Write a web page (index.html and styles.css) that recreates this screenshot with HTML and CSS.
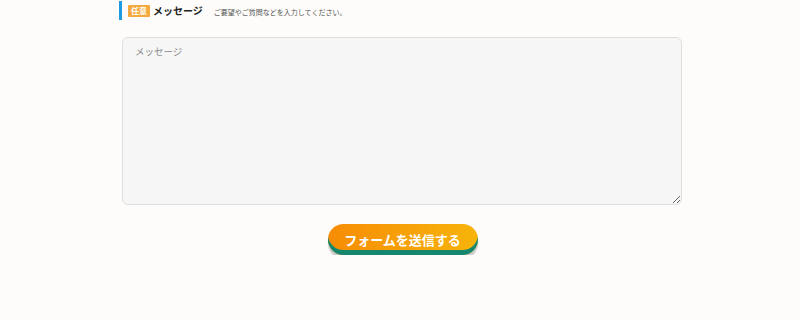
FILE: index.html
```html
<!DOCTYPE html>
<html lang="ja">
<head>
<meta charset="utf-8">
<link rel="stylesheet" href="styles.css">
</head>
<body>
<div class="wrap">
  <div class="label-row">
    <span class="badge">任意</span>
    <span class="label">メッセージ</span>
    <span class="hint">ご要望やご質問などを入力してください。</span>
  </div>
  <textarea class="message" placeholder="メッセージ"></textarea>
  <div class="actions">
    <button class="submit" type="button">フォームを送信する</button>
  </div>
</div>
</body>
</html>
```
FILE: styles.css
```css
html, body {
  margin: 0;
  padding: 0;
  background: #fdfcfa;
  font-family: "Noto Sans CJK JP", "Noto Sans", sans-serif;
  color: #333;
}
.wrap {
  width: 564px;
  margin: 0 auto;
  padding-top: 1px;
  box-sizing: border-box;
  padding-left: 1px;
}
.label-row {
  display: flex;
  align-items: center;
  height: 19px;
  border-left: 3px solid #1e9be0;
  padding-left: 6px;
}
.badge {
  background: #f4a93e;
  color: #fff;
  font-size: 8px;
  font-weight: 700;
  line-height: 12px;
  padding: 0 3px;
  border-radius: 1px;
  margin-right: 3px;
}
.label {
  font-size: 10px;
  font-weight: 700;
  color: #222;
  margin-right: 11px;
}
.hint {
  font-size: 7px;
  color: #555;
  margin-top: 2px;
}
.message {
  display: block;
  box-sizing: border-box;
  width: 560px;
  height: 168px;
  margin: 17px 0 0 3px;
  padding: 6px 12px;
  background: #f6f6f6;
  border: 1px solid #dedede;
  border-radius: 6px;
  font-family: "Noto Sans CJK JP", "Noto Sans", sans-serif;
  font-size: 9.5px;
  color: #333;
  resize: vertical;
}
.message::placeholder {
  color: #888;
}
.actions {
  display: flex;
  justify-content: center;
  margin-top: 19px;
  padding-left: 4px;
}
.submit {
  width: 150px;
  height: 31px;
  border: none;
  border-radius: 16px;
  background: linear-gradient(90deg, #f78c05, #f7b40a);
  color: #fff;
  font-family: "Noto Sans CJK JP", "Noto Sans", sans-serif;
  font-size: 13px;
  font-weight: 700;
  box-shadow: inset 0 -5px 0 #16876f, 0 4px 1px #cccccc;
  cursor: pointer;
  padding: 0;
}
```
